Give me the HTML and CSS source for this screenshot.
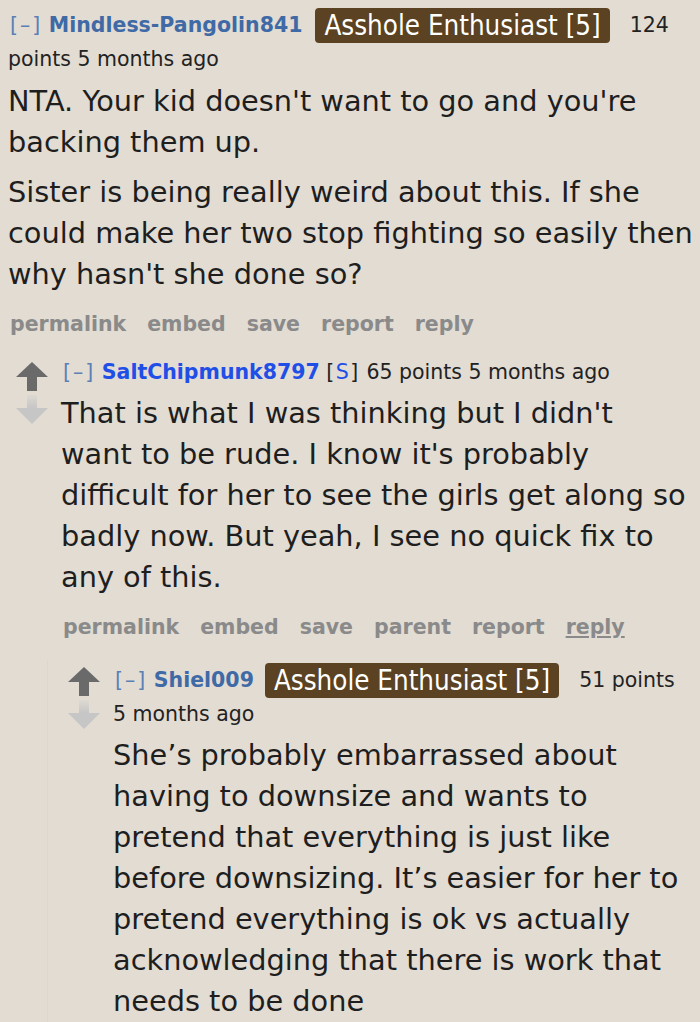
FILE: index.html
```html
<!DOCTYPE html>
<html lang="en">
<head>
<meta charset="utf-8">
<title>Comments</title>
<link rel="stylesheet" href="styles.css">
</head>
<body>
<div class="thread">
  <div class="comment top">
    <div class="entry">
      <p class="tagline"><span class="expand">[–]</span> <span class="author">Mindless-Pangolin841</span><span class="flair">Asshole Enthusiast [5]</span><span class="score">124 points</span> <time class="stamp">5 months ago</time></p>
      <div class="md">
        <p>NTA. Your kid doesn't want to go and you're backing them up.</p>
        <p>Sister is being really weird about this. If she could make her two stop fighting so easily then why hasn't she done so?</p>
      </div>
      <ul class="buttons">
        <li>permalink</li><li>embed</li><li>save</li><li>report</li><li>reply</li>
      </ul>
    </div>
    <div class="child">
      <div class="comment">
        <div class="row">
          <div class="midcol">
            <svg class="arrow" viewBox="0 0 32 29" width="32" height="29"><polygon points="16,0 32,15 21,15 21,29 11,29 11,15 0,15" fill="#6a6a6a"/></svg>
            <svg class="arrow" viewBox="0 0 32 29" width="32" height="29"><defs><linearGradient id="fadeA" x1="0" y1="0" x2="0" y2="1"><stop offset="0" stop-color="#c6c6c6" stop-opacity="0.15"/><stop offset="0.45" stop-color="#c6c6c6"/><stop offset="1" stop-color="#c6c6c6"/></linearGradient></defs><polygon points="11,0 21,0 21,13 32,13 16,29 0,13 11,13" fill="url(#fadeA)"/></svg>
          </div>
          <div class="entry entry-l2">
            <p class="tagline"><span class="expand">[–]</span> <span class="author submitter">SaltChipmunk8797</span> <span class="sub-tag">[<span class="s">S</span>]</span> <span class="score">65 points</span> <time class="stamp">5 months ago</time></p>
            <div class="md">
              <p>That is what I was thinking but I didn't want to be rude. I know it's probably difficult for her to see the girls get along so badly now. But yeah, I see no quick fix to any of this.</p>
            </div>
            <ul class="buttons">
              <li>permalink</li><li>embed</li><li>save</li><li>parent</li><li>report</li><li class="hover">reply</li>
            </ul>
          </div>
        </div>
        <div class="child nested">
          <div class="comment">
            <div class="row">
              <div class="midcol">
                <svg class="arrow" viewBox="0 0 32 29" width="32" height="29"><polygon points="16,0 32,15 21,15 21,29 11,29 11,15 0,15" fill="#6a6a6a"/></svg>
                <svg class="arrow" viewBox="0 0 32 29" width="32" height="29"><defs><linearGradient id="fadeB" x1="0" y1="0" x2="0" y2="1"><stop offset="0" stop-color="#c6c6c6" stop-opacity="0.15"/><stop offset="0.45" stop-color="#c6c6c6"/><stop offset="1" stop-color="#c6c6c6"/></linearGradient></defs><polygon points="11,0 21,0 21,13 32,13 16,29 0,13 11,13" fill="url(#fadeB)"/></svg>
              </div>
              <div class="entry">
                <p class="tagline"><span class="expand">[–]</span> <span class="author">Shiel009</span><span class="flair flair-b">Asshole Enthusiast [5]</span><span class="score">51 points</span> <time class="stamp">5 months ago</time></p>
                <div class="md">
                  <p>She’s probably embarrassed about having to downsize and wants to pretend that everything is just like before downsizing. It’s easier for her to pretend everything is ok vs actually acknowledging that there is work that needs to be done</p>
                </div>
              </div>
            </div>
          </div>
        </div>
      </div>
    </div>
  </div>
</div>
</body>
</html>
```

FILE: styles.css
```css
html, body {
  margin: 0;
  padding: 0;
}

body {
  background: #e2dcd3;
  color: #1e1e1e;
  font-family: "DejaVu Sans", Verdana, sans-serif;
  overflow: hidden;
}

.thread {
  padding: 8px 5px 0 8px;
}

.tagline {
  margin: 0;
  font-size: 20.5px;
  line-height: 33px;
  color: #222;
}

.expand {
  color: #5b80b6;
  letter-spacing: 2px;
  padding-left: 2px;
}

.author {
  font-weight: bold;
  color: #3f6aa6;
}

.author.submitter {
  color: #1f4fe6;
}

.sub-tag {
  letter-spacing: 1.5px;
}

.s {
  color: #1f4fe6;
}

.stamp {
  white-space: nowrap;
}

.flair {
  display: inline-block;
  background: #5a4222;
  color: #fff;
  font-family: "DejaVu Sans Condensed", "Liberation Sans", sans-serif;
  font-stretch: condensed;
  font-size: 27.5px;
  line-height: 35px;
  padding: 0 9px;
  border-radius: 4px;
  margin: 0 20px 0 13px;
  vertical-align: middle;
}

.flair-b {
  margin-left: 11px;
}

.md {
  font-size: 28.8px;
  line-height: 41px;
  margin-top: 5px;
}

.md p {
  margin: 0 0 9px;
}

.md p:last-child {
  margin-bottom: 0;
}

.buttons {
  list-style: none;
  margin: 15px 0 0;
  padding: 0 0 0 2px;
  display: flex;
  gap: 21px;
  font-weight: bold;
  font-size: 20.5px;
  line-height: 28px;
  color: #8a8a8a;
}

.buttons .hover {
  text-decoration: underline;
}

.child {
  margin-top: 18px;
  padding-left: 8px;
}

.row {
  display: flex;
  gap: 13px;
}

.midcol {
  flex: none;
  width: 32px;
  display: flex;
  flex-direction: column;
  gap: 4px;
  padding-top: 6px;
}

.arrow {
  display: block;
}

.row .entry {
  flex: 1;
  min-width: 0;
}

.row .entry-l2 {
  padding-right: 9px;
}

.row .md {
  margin-top: 4px;
}

.child.nested {
  margin-top: 19px;
  margin-left: 31px;
  padding-left: 20px;
  padding-top: 3px;
  border-left: 1px solid #d6d6e6;
  padding-bottom: 40px;
}

.nested .midcol {
  padding-top: 4px;
}
```
